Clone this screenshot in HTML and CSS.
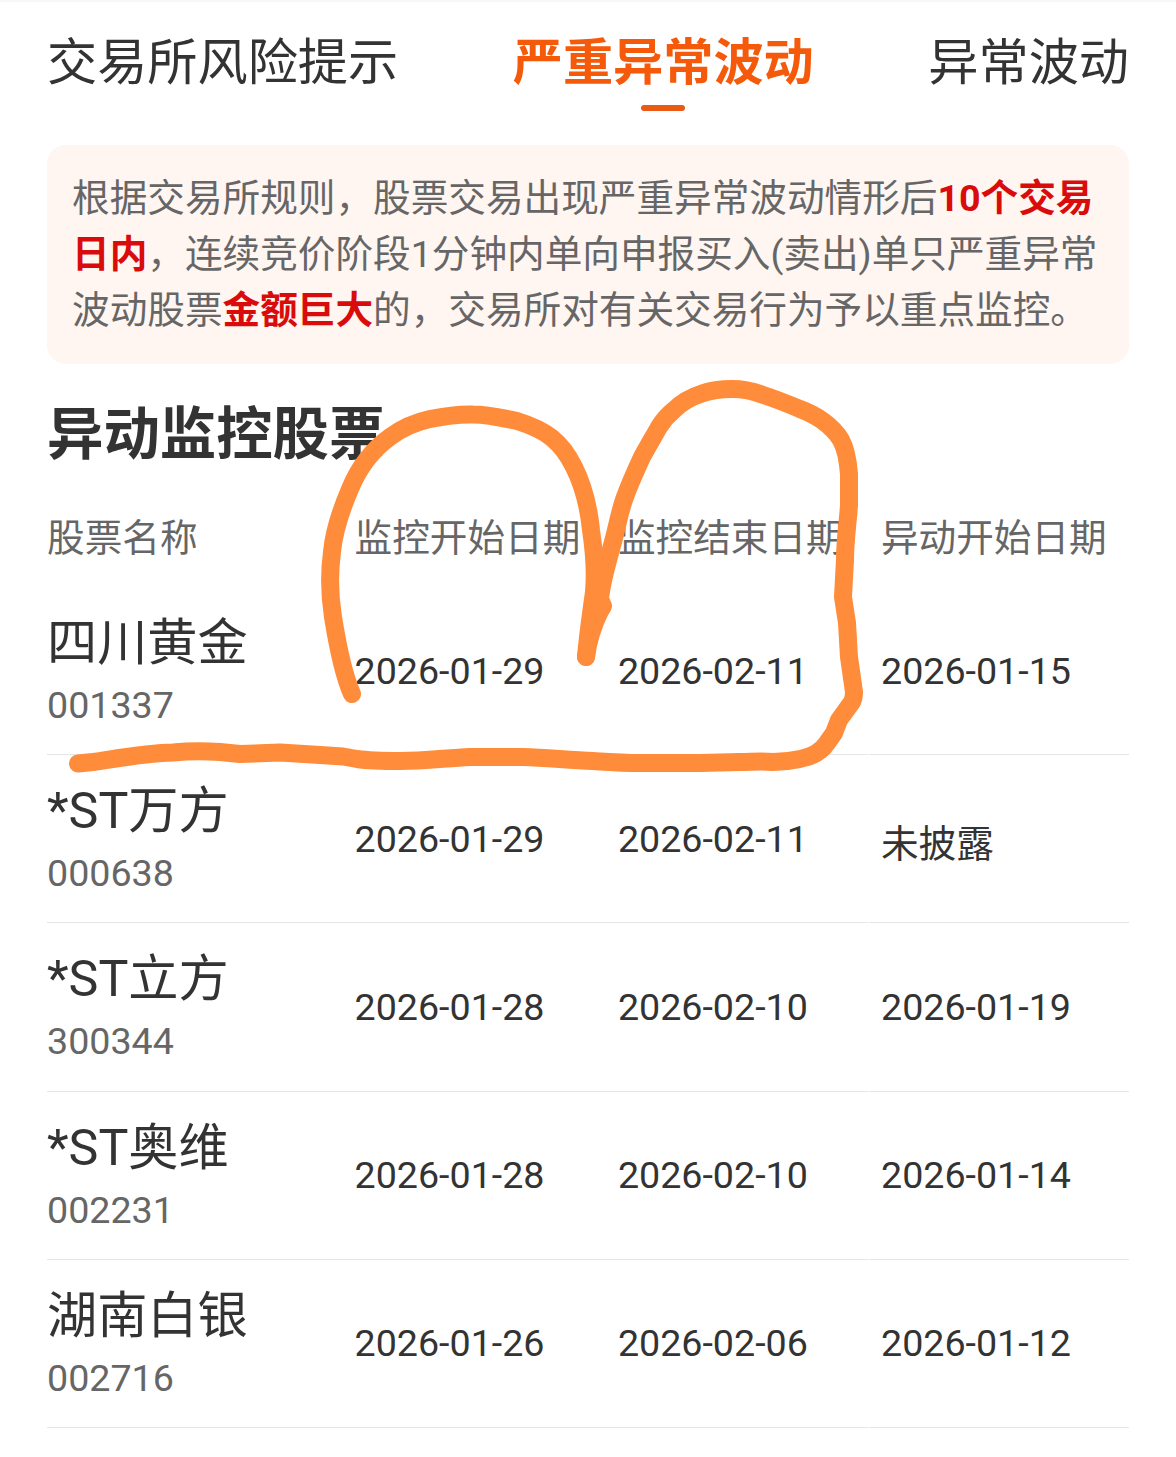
FILE: index.html
```html
<!DOCTYPE html>
<html lang="zh-CN">
<head>
    <meta charset="UTF-8">
    <meta name="viewport" content="width=device-width, initial-scale=1.0">
    <title>严重异常波动</title>
    <link rel="stylesheet" href="styles.css">
</head>
<body>
    <div class="page">
        <nav class="tabs">
            <a class="tab">交易所风险提示</a>
            <a class="tab active">严重异常波动</a>
            <a class="tab">异常波动</a>
        </nav>

        <p class="notice">根据交易所规则，股票交易出现严重异常波动情形后<strong>10个交易日内</strong>，连续竞价阶段1分钟内单向申报买入(卖出)单只严重异常波动股票<strong>金额巨大</strong>的，交易所对有关交易行为予以重点监控。</p>

        <h1 class="title">异动监控股票</h1>

        <div class="table">
            <div class="row head">
                <div class="cell">股票名称</div>
                <div class="cell">监控开始日期</div>
                <div class="cell">监控结束日期</div>
                <div class="cell">异动开始日期</div>
            </div>
            <div class="row">
                <div class="cell stock"><span class="name">四川黄金</span><span class="code">001337</span></div>
                <div class="cell">2026-01-29</div>
                <div class="cell">2026-02-11</div>
                <div class="cell">2026-01-15</div>
            </div>
            <div class="row">
                <div class="cell stock"><span class="name">*ST万方</span><span class="code">000638</span></div>
                <div class="cell">2026-01-29</div>
                <div class="cell">2026-02-11</div>
                <div class="cell undisclosed">未披露</div>
            </div>
            <div class="row">
                <div class="cell stock"><span class="name">*ST立方</span><span class="code">300344</span></div>
                <div class="cell">2026-01-28</div>
                <div class="cell">2026-02-10</div>
                <div class="cell">2026-01-19</div>
            </div>
            <div class="row">
                <div class="cell stock"><span class="name">*ST奥维</span><span class="code">002231</span></div>
                <div class="cell">2026-01-28</div>
                <div class="cell">2026-02-10</div>
                <div class="cell">2026-01-14</div>
            </div>
            <div class="row">
                <div class="cell stock"><span class="name">湖南白银</span><span class="code">002716</span></div>
                <div class="cell">2026-01-26</div>
                <div class="cell">2026-02-06</div>
                <div class="cell">2026-01-12</div>
            </div>
        </div>

        <!-- hand-drawn marker over the table -->
        <svg class="marker" viewBox="0 0 1176 1457" aria-hidden="true">
            <path d="M352 694C343 674 337 642 333 617C329 592 330 567 332 552C334 530 341 510 350 489C359 467 372 450 390 437C402 428 416 422 430 419C445 416 459 414 473 414.500C488 414.500 503 418 517 421C530 425 542 430 552 438C562 446 569 457 574 467C584 487 589 510 591 530C594 550 596 570 594 592C591 614 588 633 586 657"/>
            <path d="M586 657C588 642 592 627 600 611L603 606L600 599C602 578 609 558 614 538C618 523 620 510 625 497C630 483 636 470 642 457C648 446 654 436 659 427C664 419 669 414 674 410C682 402 691 397 702 393.500C712 390 722 389 732 389C743 389 753 391 763 395C776 399 788 404 800 409C808 412 816 416 823 421C831 427 837 433 841 440C846 449 848 461 849 474V505C848 522 845 540 845 560L843 597L847 623L849 657L854 692Q854 698 852 702L839 720L834 733L827 743C821 752 811 757 800 759C791 761 782 762 773 762C762 761 751 762 740 762L700 763H640C624 763 609 762 593 761C570 760 547 758 523 757C505 757 488 757 470 757C447 758 424 761 400 761C386 761 371 761 357 759L343 756.500L320 755L280 752.500L240 754L220 752C204 751 189 751 173 752.500C146 753 120 758 93 762L78 763.500"/>
        </svg>
    </div>
</body>
</html>
```
FILE: styles.css
```css
* {
    box-sizing: border-box;
}
body {
    margin: 0;
    font-family: Roboto, "Noto Sans CJK SC", sans-serif;
    font-size: 37.63px;
    color: #333;
    background: #fff;
}
.page {
    position: relative;
    min-height: 1457px;
    padding: 0 47px;
    border-top: 2px solid #f7f7f7;
}
.tabs {
    display: flex;
    justify-content: space-between;
    height: 143px;
    padding-top: 23px;
}
.tab {
    display: flex;
    flex-direction: column;
    align-items: center;
    font-size: 50.18px;
    line-height: 75px;
}
.tab.active {
    color: #f55a0a;
    font-weight: bold;
}
.tab.active::after {
    content: '';
    width: 44px;
    height: 6px;
    margin-top: 5px;
    border-radius: 3px;
    background: #ea5a14;
}
.notice {
    height: 219px;
    margin: 0;
    padding: 25px;
    border-radius: 19px;
    background: #fff5f1;
    color: #666;
    line-height: 56px;
}
.notice strong {
    color: #d90b0b;
}
.title {
    margin: 29px 0 0;
    font-size: 56.4px;
    line-height: 84px;
}
.row {
    display: grid;
    grid-template-columns: 295.5px 263.4px 262.6px 1fr;
    height: 168.2px;
}
.cell {
    display: flex;
    align-items: center;
    padding: 0 0 0 12px;
    border-bottom: 1px solid #e5e5e5;
    white-space: nowrap;
}
.cell:first-child {
    padding-left: 0;
}
.cell:last-child {
    margin-left: 1px;
    padding-left: 11.5px;
}
.row.head {
    height: 110px;
    padding-top: 5px;
    color: #666;
}
.row.head .cell {
    border-bottom: none;
}
.cell.stock {
    flex-direction: column;
    align-items: flex-start;
    padding-top: 19px;
}
.cell.undisclosed {
    padding-top: 3px;
}
.name {
    font-size: 50.18px;
    line-height: 73px;
}
.code {
    color: #666;
    line-height: 52px;
}
.marker {
    position: absolute;
    top: -2px;
    left: 0;
    width: 1176px;
    height: 1457px;
    fill: none;
    stroke: #ff8c3a;
    stroke-width: 18;
    stroke-linecap: round;
    stroke-linejoin: round;
    pointer-events: none;
}
```
